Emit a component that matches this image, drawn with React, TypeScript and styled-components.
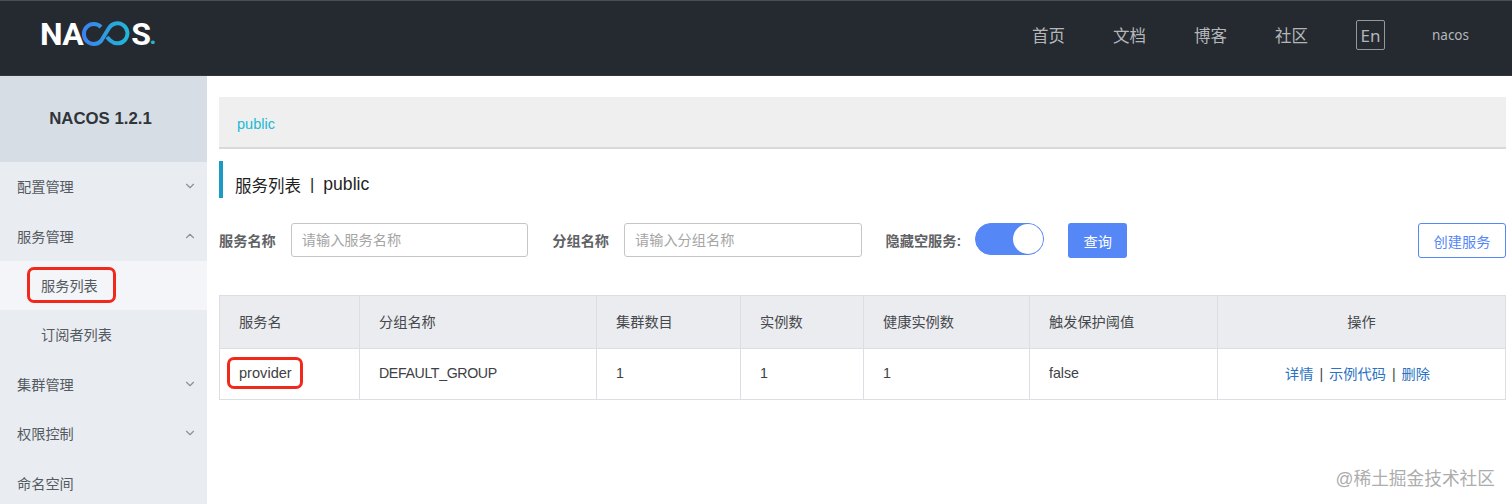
import styled, { createGlobalStyle } from 'styled-components';
import { ChevronDown, ChevronUp } from 'lucide-react';

const GlobalStyle = createGlobalStyle`
  html, body {
    margin: 0;
    padding: 0;
    background: #ffffff;
    overflow: hidden;
  }
  * {
    box-sizing: border-box;
  }
  body {
    font-family: "Liberation Sans", "Noto Sans CJK SC", sans-serif;
    font-size: 14px;
    color: #333333;
  }
`;

const Page = styled.div`
  position: relative;
  width: 1512px;
  height: 504px;
  overflow: hidden;
`;

const Header = styled.header`
  height: 76px;
  display: flex;
  align-items: center;
  justify-content: space-between;
  padding: 0 43px 0 40px;
  background: #252a30;
  border-top: 1px solid #4a4d52;
  border-bottom: 1px solid #33373c;
`;

const Logo = styled.div`
  display: flex;
  align-items: center;
  height: 30px;
  font-family: "Roboto", "Liberation Sans", sans-serif;
  font-size: 32px;
  font-weight: 700;
  line-height: 30px;
  letter-spacing: -0.5px;
  color: #ffffff;
  margin-top: -8px;
`;

const LogoDot = styled.span`
  color: #27b6c9;
  font-size: 24px;
  margin: 4px 0 0 -1px;
`;

const Nav = styled.nav`
  display: flex;
  align-items: center;
  gap: 48px;
  margin-top: -6px;
  color: #b4b7ba;
`;

const NavLink = styled.span`
  font-size: 16.5px;
`;

const LangBox = styled.span`
  width: 29px;
  height: 30px;
  display: flex;
  align-items: center;
  justify-content: center;
  border: 1px solid #94979b;
  border-radius: 2px;
  font-family: "Noto Sans", sans-serif;
  font-size: 17px;
`;

const UserName = styled.span`
  font-family: "Noto Sans", sans-serif;
  font-size: 13.5px;
  margin-left: -1px;
`;

const Body = styled.div`
  display: flex;
  height: 428px;
`;

const Sidebar = styled.aside`
  width: 207px;
  flex: none;
  background: #e9edf2;
`;

const SideTitle = styled.div`
  height: 86px;
  display: flex;
  align-items: center;
  justify-content: center;
  padding: 0 6px 0 0;
  background: #d7dde4;
  font-size: 16.8px;
  font-weight: 700;
  color: #2f3439;
`;

const MenuItem = styled.div<{ $sub?: boolean; $active?: boolean }>`
  height: 49.4px;
  display: flex;
  align-items: center;
  justify-content: space-between;
  padding: 0 10px 1px ${(p) => (p.$sub ? '41px' : '17px')};
  background: ${(p) => (p.$active ? '#f3f5f9' : 'transparent')};
  color: #545a60;
  font-size: 14.2px;
`;

const MenuChevron = styled.span`
  display: flex;
  color: #8d9197;
`;

const RedMark = styled.span<{ $left: number; $right: number }>`
  position: relative;

  &::after {
    content: '';
    position: absolute;
    left: -${(p) => p.$left}px;
    right: -${(p) => p.$right}px;
    top: -8px;
    bottom: -8px;
    border: 3px solid #f1291c;
    border-radius: 7px;
  }
`;

const Main = styled.main`
  flex: 1;
  padding: 21px 7px 0 12px;
`;

const Crumb = styled.div`
  height: 52px;
  display: flex;
  align-items: center;
  padding: 3px 0 0 18px;
  background: #efefef;
  border-bottom: 2px solid #d9d9d9;
  color: #20b9d4;
  font-size: 14.5px;
`;

const PageTitle = styled.h1`
  height: 37px;
  margin: 12px 0 0;
  display: flex;
  align-items: center;
  padding: 10px 0 0 12px;
  border-left: 4px solid #1a9ac4;
  font-size: 16.5px;
  font-weight: 400;
  color: #1f1f1f;
`;

const TitleSep = styled.span`
  margin: 0 9px 0 9px;
`;

const TitleName = styled.span`
  font-size: 17.6px;
`;

const FilterRow = styled.div`
  height: 35px;
  margin-top: 25px;
  display: flex;
  align-items: flex-start;
`;

const FilterLabel = styled.label<{ $gap: number }>`
  align-self: center;
  padding-bottom: 2px;
  font-size: 14.2px;
  font-weight: 700;
  color: #5f6265;
  margin-right: ${(p) => p.$gap}px;
`;

const TextInput = styled.input`
  width: 237.5px;
  height: 34px;
  margin-right: 24px;
  padding: 0 10px;
  border: 1px solid #c6c6c6;
  border-radius: 3px;
  font-family: inherit;
  font-size: 14.2px;
  background: #ffffff;
  outline: none;

  &::placeholder {
    color: #a5a5a5;
  }
`;

const Toggle = styled.span`
  width: 69px;
  height: 32px;
  margin-right: 24px;
  display: flex;
  justify-content: flex-end;
  background: #5587f7;
  border: 1px solid #5587f7;
  border-radius: 16px;
`;

const ToggleKnob = styled.span`
  width: 30px;
  height: 30px;
  border-radius: 50%;
  background: #ffffff;
`;

const SearchButton = styled.button`
  width: 59px;
  height: 35px;
  border: none;
  border-radius: 3px;
  background: #5587f7;
  color: #ffffff;
  font-family: inherit;
  font-size: 14.2px;
`;

const CreateButton = styled.button`
  width: 88px;
  height: 35px;
  margin-left: auto;
  border: 1px solid #5587f7;
  border-radius: 3px;
  background: #ffffff;
  color: #5587f7;
  font-family: inherit;
  font-size: 14.2px;
`;

const Table = styled.table`
  width: 1286px;
  margin-top: 37px;
  table-layout: fixed;
  border-collapse: collapse;
  border: 1px solid #dcdee3;
`;

const HeadCell = styled.th<{ $center?: boolean }>`
  height: 53px;
  padding: 0 19px 3px;
  background: #ebecf0;
  border: 1px solid #dcdee3;
  text-align: ${(p) => (p.$center ? 'center' : 'left')};
  font-size: 14.2px;
  font-weight: 400;
  color: #45484c;
`;

const BodyCell = styled.td<{ $center?: boolean }>`
  height: 51px;
  padding: ${(p) => (p.$center ? '0 27px 2px 19px' : '0 19px 2px')};
  border: 1px solid #dcdee3;
  text-align: ${(p) => (p.$center ? 'center' : 'left')};
  font-size: 14.2px;
  color: #3e4145;
`;

const ServiceName = styled.span`
  font-size: 14.6px;
`;

const GroupName = styled.span`
  font-size: 14.2px;
  letter-spacing: -0.38px;
`;

const ActionLink = styled.a`
  color: #2a72c4;
`;

const ActionSep = styled.span`
  margin: 0 6px;
  color: #45484c;
`;

const Watermark = styled.div`
  position: absolute;
  right: 17px;
  bottom: 14px;
  font-size: 17.7px;
  line-height: 22px;
  color: #adadad;
  text-shadow: 0 1px 0 rgba(255, 255, 255, 0.8);
`;

const menuIconSize = 14;

const columns = [140, 237, 144, 123, 166, 188, 288];

const NacosInfinity = () => (
  <svg width="50" height="26" viewBox="0 0 50 26" fill="none" style={{ margin: '0 0 0 -2px' }}>
    <defs>
      <linearGradient id="nacosLoop" x1="0" y1="0" x2="50" y2="0" gradientUnits="userSpaceOnUse">
        <stop offset="0" stopColor="#3d7ff0" />
        <stop offset="1" stopColor="#1fbad6" />
      </linearGradient>
    </defs>
    <path
      d="M20 6 A10 10 0 1 0 20 20 L28 7 A10 10 0 1 1 30 20 Q28 18.5 26 16"
      stroke="url(#nacosLoop)"
      strokeWidth="4"
      strokeLinecap="butt"
    />
  </svg>
);

const App = () => {
  return (
    <Page>
      <GlobalStyle />
      <Header>
        <Logo>
          NA
          <NacosInfinity />
          S<LogoDot>.</LogoDot>
        </Logo>
        <Nav>
          <NavLink>首页</NavLink>
          <NavLink>文档</NavLink>
          <NavLink>博客</NavLink>
          <NavLink>社区</NavLink>
          <LangBox>En</LangBox>
          <UserName>nacos</UserName>
        </Nav>
      </Header>
      <Body>
        <Sidebar>
          <SideTitle>NACOS 1.2.1</SideTitle>
          <MenuItem>
            配置管理
            <MenuChevron><ChevronDown size={menuIconSize} /></MenuChevron>
          </MenuItem>
          <MenuItem>
            服务管理
            <MenuChevron><ChevronUp size={menuIconSize} /></MenuChevron>
          </MenuItem>
          <MenuItem $sub $active>
            <RedMark $left={14} $right={18}>服务列表</RedMark>
          </MenuItem>
          <MenuItem $sub>订阅者列表</MenuItem>
          <MenuItem>
            集群管理
            <MenuChevron><ChevronDown size={menuIconSize} /></MenuChevron>
          </MenuItem>
          <MenuItem>
            权限控制
            <MenuChevron><ChevronDown size={menuIconSize} /></MenuChevron>
          </MenuItem>
          <MenuItem>命名空间</MenuItem>
        </Sidebar>
        <Main>
          <Crumb>public</Crumb>
          <PageTitle>
            服务列表<TitleSep>|</TitleSep><TitleName>public</TitleName>
          </PageTitle>
          <FilterRow>
            <FilterLabel $gap={15}>服务名称</FilterLabel>
            <TextInput placeholder="请输入服务名称" />
            <FilterLabel $gap={15}>分组名称</FilterLabel>
            <TextInput placeholder="请输入分组名称" />
            <FilterLabel $gap={14}>隐藏空服务:</FilterLabel>
            <Toggle><ToggleKnob /></Toggle>
            <SearchButton>查询</SearchButton>
            <CreateButton>创建服务</CreateButton>
          </FilterRow>
          <Table>
            <colgroup>
              {columns.map((w, i) => (
                <col key={i} style={{ width: w }} />
              ))}
            </colgroup>
            <thead>
              <tr>
                <HeadCell>服务名</HeadCell>
                <HeadCell>分组名称</HeadCell>
                <HeadCell>集群数目</HeadCell>
                <HeadCell>实例数</HeadCell>
                <HeadCell>健康实例数</HeadCell>
                <HeadCell>触发保护阈值</HeadCell>
                <HeadCell $center>操作</HeadCell>
              </tr>
            </thead>
            <tbody>
              <tr>
                <BodyCell><RedMark $left={12} $right={11}><ServiceName>provider</ServiceName></RedMark></BodyCell>
                <BodyCell><GroupName>DEFAULT_GROUP</GroupName></BodyCell>
                <BodyCell>1</BodyCell>
                <BodyCell>1</BodyCell>
                <BodyCell>1</BodyCell>
                <BodyCell>false</BodyCell>
                <BodyCell $center>
                  <ActionLink>详情</ActionLink>
                  <ActionSep>|</ActionSep>
                  <ActionLink>示例代码</ActionLink>
                  <ActionSep>|</ActionSep>
                  <ActionLink>删除</ActionLink>
                </BodyCell>
              </tr>
            </tbody>
          </Table>
        </Main>
      </Body>
      <Watermark>@稀土掘金技术社区</Watermark>
    </Page>
  );
};

export default App;
